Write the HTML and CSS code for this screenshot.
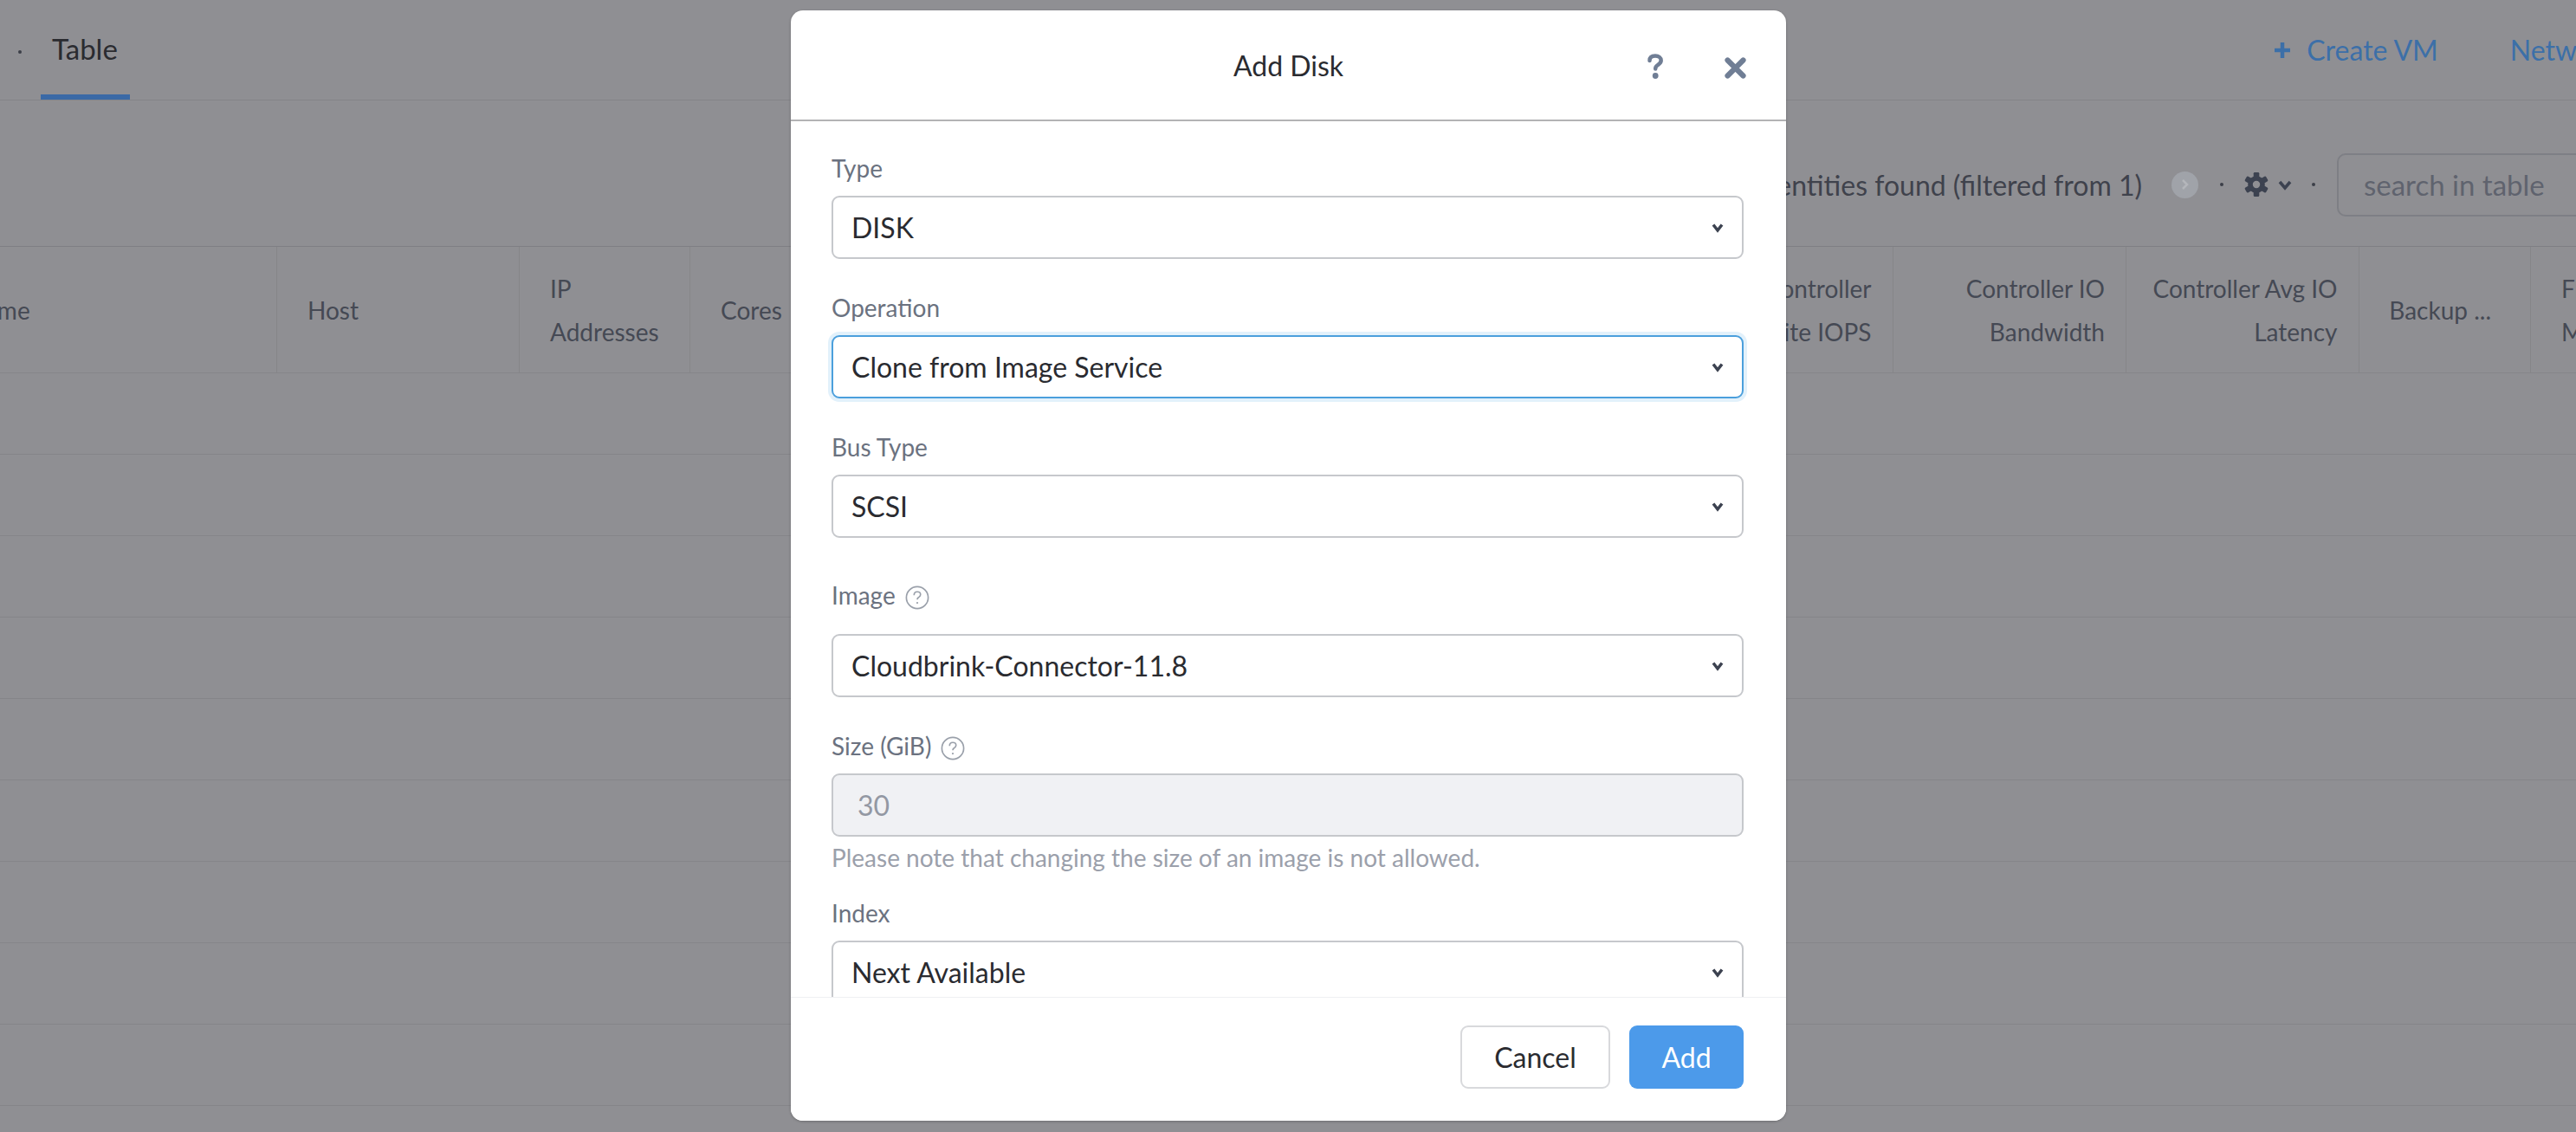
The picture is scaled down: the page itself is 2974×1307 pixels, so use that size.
FILE: index.html
```html
<!DOCTYPE html>
<html lang="en">
<head>
  <meta charset="UTF-8">
  <title>Add Disk</title>
  <link rel="stylesheet" href="styles.css">
</head>
<body>

  <div class="topbar">
    <span class="dot tab-dot"></span>
    <div class="tab">Table</div>
    <div class="actions">
      <a class="action"><svg class="plus" viewBox="0 0 20 20"><path d="M10 1v18M1 10h18"/></svg>Create VM</a>
      <a class="action">Network</a>
    </div>
  </div>

  <div class="toolbar">
    <span class="count">0 entities found (filtered from 1)</span>
    <span class="badge"><svg viewBox="0 0 10 14"><path d="M2 2l5 5-5 5"/></svg></span>
    <span class="dot"></span>
    <svg class="gear" viewBox="-16 -16 32 32">
      <circle r="10.5"/>
      <rect x="-3.5" y="-15" width="7" height="30" rx="1.5"/>
      <rect x="-3.5" y="-15" width="7" height="30" rx="1.5" transform="rotate(60)"/>
      <rect x="-3.5" y="-15" width="7" height="30" rx="1.5" transform="rotate(120)"/>
      <circle class="gear-hole" r="4.5"/>
    </svg>
    <svg class="gear-caret" viewBox="0 0 16 12"><path d="M2 2l6 7 6-7"/></svg>
    <span class="dot"></span>
    <div class="search">search in table</div>
  </div>

  <div class="table-head">
    <div class="th">Name</div>
    <div class="th">Host</div>
    <div class="th">IP<br>Addresses</div>
    <div class="th">Cores</div>
    <div class="th"></div>
    <div class="th th-right">Controller<br>Write IOPS</div>
    <div class="th th-right">Controller IO<br>Bandwidth</div>
    <div class="th th-right">Controller Avg IO<br>Latency</div>
    <div class="th th-right th-backup">Backup ...</div>
    <div class="th">Flash<br>Mode</div>
  </div>
  <div class="row"></div>
  <div class="row"></div>
  <div class="row"></div>
  <div class="row"></div>
  <div class="row"></div>
  <div class="row"></div>
  <div class="row"></div>
  <div class="row"></div>
  <div class="row"></div>

  <div class="modal">
    <div class="modal-header">
      <h2>Add Disk</h2>
      <svg class="head-help" viewBox="0 0 18 30"><path d="M2.5 8C2.5 4 5.5 2.5 9 2.5c4 0 6.7 2 6.7 5.3 0 3.2-2.5 4.3-4.4 5.7-1.4 1-2.1 2-2.1 4"/><circle cx="9.2" cy="25.5" r="3.4"/></svg>
      <svg class="head-close" viewBox="0 0 24 24"><path d="M4 4l16 16M20 4L4 20"/></svg>
    </div>

    <div class="modal-body">
      <div class="field">
        <label>Type</label>
        <div class="select-wrap">
          <select><option>DISK</option></select>
          <svg class="caret" viewBox="0 0 14 12"><path d="M2 2.5l5 6.5 5-6.5"/></svg>
        </div>
      </div>

      <div class="field">
        <label>Operation</label>
        <div class="select-wrap">
          <select class="focused"><option>Clone from Image Service</option></select>
          <svg class="caret" viewBox="0 0 14 12"><path d="M2 2.5l5 6.5 5-6.5"/></svg>
        </div>
      </div>

      <div class="field">
        <label>Bus Type</label>
        <div class="select-wrap">
          <select><option>SCSI</option></select>
          <svg class="caret" viewBox="0 0 14 12"><path d="M2 2.5l5 6.5 5-6.5"/></svg>
        </div>
      </div>

      <div class="field field-image">
        <label>Image
          <svg class="help" viewBox="0 0 30 30"><circle cx="15" cy="15" r="13.5"/><path d="M11 12c0-3 2-4.2 4-4.2 2.400 0 4 1.400 4 3.500 0 2-1.500 2.700-2.800 3.700-.9.7-1.200 1.400-1.200 2.500"/><circle class="help-dot" cx="15" cy="21.500" r="1.200"/></svg>
        </label>
        <div class="select-wrap">
          <select><option>Cloudbrink-Connector-11.8</option></select>
          <svg class="caret" viewBox="0 0 14 12"><path d="M2 2.5l5 6.5 5-6.5"/></svg>
        </div>
      </div>

      <div class="field field-size">
        <label>Size (GiB)
          <svg class="help" viewBox="0 0 30 30"><circle cx="15" cy="15" r="13.5"/><path d="M11 12c0-3 2-4.2 4-4.2 2.400 0 4 1.400 4 3.500 0 2-1.500 2.700-2.800 3.700-.9.7-1.200 1.400-1.200 2.500"/><circle class="help-dot" cx="15" cy="21.500" r="1.200"/></svg>
        </label>
        <input type="text" value="30" disabled>
        <p class="note">Please note that changing the size of an image is not allowed.</p>
      </div>

      <div class="field">
        <label>Index</label>
        <div class="select-wrap">
          <select><option>Next Available</option></select>
          <svg class="caret" viewBox="0 0 14 12"><path d="M2 2.5l5 6.5 5-6.5"/></svg>
        </div>
      </div>
    </div>

    <div class="modal-footer">
      <button class="btn">Cancel</button>
      <button class="btn btn-primary">Add</button>
    </div>
  </div>

</body>
</html>
```

FILE: styles.css
```css
* {
  box-sizing: border-box;
}
html, body {
  height: 1307px;
  overflow: hidden;
}
body {
  margin: 0;
  font-family: "Lato", sans-serif;
  font-size: 28px;
  background: #8f8f93;
  color: #2a2b30;
  position: relative;
}

/* page behind the dialog, colours are already dimmed */
.topbar {
  display: flex;
  align-items: stretch;
  height: 116px;
  padding-left: 21px;
  border-bottom: 1px solid #848488;
}
.dot {
  width: 4px;
  height: 4px;
  border-radius: 50%;
  background: #3c3f48;
  flex-shrink: 0;
}
.tab-dot {
  align-self: center;
  margin: 4px 22px 0 0;
}
.tab {
  padding: 37px 14px 0 13px;
  height: 115px;
  font-size: 33px;
  line-height: 38px;
  border-bottom: 6px solid #3a69a6;
}
.actions {
  display: flex;
  align-items: center;
  gap: 83px;
  margin-left: auto;
  margin-right: -47px;
  color: #3c6fa8;
  font-size: 32px;
}
.action {
  display: flex;
  align-items: center;
  white-space: nowrap;
}
.plus {
  width: 20px;
  height: 20px;
  margin-right: 18px;
  fill: none;
  stroke: #3c6fa8;
  stroke-width: 4.5;
}
.toolbar {
  display: flex;
  align-items: center;
  justify-content: flex-end;
  height: 169px;
  padding-top: 26px;
  margin-right: -24px;
  border-bottom: 1px solid #7f7f84;
  color: #3f424c;
}
.count {
  font-size: 32px;
  margin-right: 34px;
}
.badge {
  display: flex;
  align-items: center;
  justify-content: center;
  width: 31px;
  height: 31px;
  border-radius: 50%;
  background: #a0a3a9;
  margin-right: 25px;
}
.badge svg {
  width: 10px;
  height: 14px;
  fill: none;
  stroke: #b4b6bb;
  stroke-width: 2.5;
}
.gear {
  width: 30px;
  height: 30px;
  margin-left: 23px;
  fill: #3c4250;
}
.gear-hole {
  fill: #8f8f93;
}
.gear-caret {
  width: 16px;
  height: 12px;
  margin: 2px 0 0 10px;
  fill: none;
  stroke: #3c4250;
  stroke-width: 3.5;
}
.toolbar .gear-caret + .dot {
  margin-left: 23px;
}
.search {
  width: 300px;
  height: 73px;
  margin-left: 25px;
  padding-left: 29px;
  border: 2px solid #7e7f85;
  border-radius: 10px;
  font-size: 33px;
  line-height: 69px;
  color: #5f636e;
}
.table-head {
  display: grid;
  grid-template-columns: 405px 280px 197px 160px 1073px 155.5px 269.5px 268.5px 198.5px 140px;
  height: 146px;
  margin-left: -85px;
  border-bottom: 1px solid #858589;
}
.th {
  display: flex;
  align-items: center;
  padding: 0 24px 0 35px;
  font-size: 28px;
  line-height: 50px;
  color: #454954;
  border-right: 1px solid #868689;
  white-space: nowrap;
}
.th:first-child {
  padding-left: 47px;
}
.th-right {
  justify-content: flex-end;
  text-align: right;
}
.th-backup {
  padding-right: 45px;
}
.row {
  height: 94px;
  border-bottom: 1px solid #858589;
}

/* dialog */
.modal {
  position: absolute;
  top: 12px;
  left: 913px;
  width: 1149px;
  height: 1282px;
  display: flex;
  flex-direction: column;
  background: white;
  border-radius: 14px;
  overflow: hidden;
  box-shadow: 0 1px 3px rgba(0, 0, 0, 0.25);
}
.modal-header {
  position: relative;
  flex-shrink: 0;
  height: 128px;
  border-bottom: 2px solid #b3b3b5;
}
.modal-header h2 {
  margin: 0;
  font-size: 32px;
  font-weight: 400;
  line-height: 128px;
  text-align: center;
  color: #2a2b30;
}
.head-help {
  position: absolute;
  left: 989px;
  top: 50px;
  width: 18px;
  height: 30px;
  fill: #707e95;
  stroke: none;
}
.head-help path {
  fill: none;
  stroke: #707e95;
  stroke-width: 4.500;
  stroke-linecap: round;
}
.head-close {
  position: absolute;
  left: 1077px;
  top: 53px;
  width: 27px;
  height: 27px;
  fill: none;
  stroke: #707e95;
  stroke-width: 5.500;
  stroke-linecap: round;
}
.modal-body {
  flex: 1;
  overflow: hidden;
  padding: 37px 49px 0 47px;
}
.field {
  margin-bottom: 39px;
}
.field label {
  display: flex;
  align-items: center;
  height: 34px;
  margin-bottom: 15px;
  font-size: 28px;
  color: #6b7280;
}
.field-image {
  padding-top: 10px;
}
.field-image label {
  margin-bottom: 28px;
}
.field-size {
  margin-bottom: 30px;
}
.help {
  width: 28px;
  height: 28px;
  margin: 6px 0 0 11px;
  fill: none;
  stroke: #9aa0aa;
  stroke-width: 1.800;
}
.help-dot {
  fill: #9aa0aa;
  stroke: none;
}
.select-wrap {
  position: relative;
}
select, input {
  display: block;
  width: 100%;
  height: 73px;
  padding: 0 21px;
  border: 2px solid #c6c8cc;
  border-radius: 9px;
  background: white;
  font-family: inherit;
  font-size: 32px;
  color: #2a2b30;
  appearance: none;
  outline: none;
}
select.focused {
  border-color: #4b9fdc;
  box-shadow: 0 0 0 4px #e2f1fb;
}
input:disabled {
  padding-left: 28px;
  background: #f0f1f4;
  color: #9398a3;
}
.caret {
  position: absolute;
  right: 23px;
  top: 31px;
  width: 14px;
  height: 12px;
  fill: none;
  stroke: #3c4250;
  stroke-width: 3.500;
}
.note {
  margin: 7px 0 0;
  font-size: 28px;
  line-height: 34px;
  color: #9ba0ab;
}
.modal-footer {
  display: flex;
  justify-content: flex-end;
  gap: 22px;
  flex-shrink: 0;
  height: 143px;
  padding: 32px 49px 0 0;
  background: white;
  border-top: 1px solid #eff0f2;
}
.btn {
  height: 73px;
  width: 173px;
  border: 2px solid #d8d9dc;
  border-radius: 9px;
  background: white;
  font-family: inherit;
  font-size: 32px;
  color: #2a2b30;
}
.btn-primary {
  width: 132px;
  border: none;
  background: #4c9aea;
  color: white;
}
```
